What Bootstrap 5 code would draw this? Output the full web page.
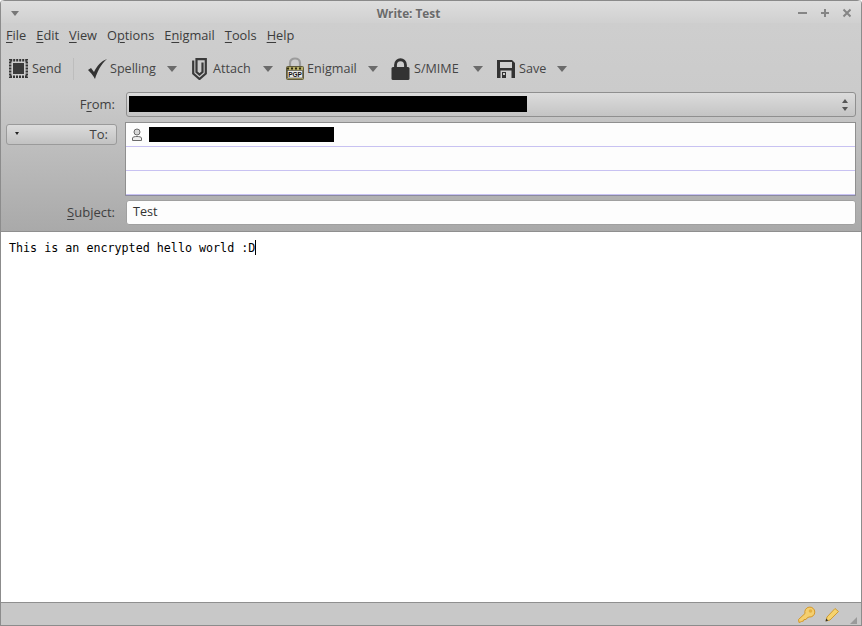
<!DOCTYPE html>
<html lang="en">
<head>
<meta charset="utf-8">
<title>Write: Test</title>
<link href="https://cdn.jsdelivr.net/npm/bootstrap@5.3.0/dist/css/bootstrap.min.css" rel="stylesheet">
<style>
html,body{height:626px;overflow:hidden;background:#fff}
body{font-family:"Open Sans","Noto Sans",sans-serif;font-size:12.6px;color:#3f3f3f;line-height:18px}
u{text-underline-offset:2px;text-decoration-thickness:1px}
.win{height:626px;width:862px;border:1px solid #8c8c8c;border-top:0;border-radius:4px 4px 0 0;overflow:hidden}
.upper{background:linear-gradient(#cfcfcf 0,#cbcbcb 90px,#a9a9a9 231px);border-bottom:1px solid #8f8f8f;height:232px;border-top:1px solid #8a8a8a;border-radius:4px 4px 0 0}
.tbar{height:22px;padding:2px 10px 0 10px;background:linear-gradient(#dedede,#d0d0d0)}
.ttl{font-weight:700;font-size:11.8px;color:#6a6a6a;text-shadow:0 1px 0 #e4e4e4}
.mbar{height:25px;padding-left:5px;gap:10px;font-size:12.8px;color:#3c3c3c;padding-top:3px}
.tools{height:41px;padding-left:8px;color:#454545}
.drp{width:0;height:0;border:5px solid transparent;border-top:6px solid #6b6b6b;border-bottom:0}
.drp-title{border-width:4.500px;border-top:5px solid #777;border-bottom:0}
.tool{height:100%}
.t-send{width:64px;gap:4px}
.t-spell{width:90px;gap:3px;margin-left:13px}
.t-attach{width:81px;gap:6px;margin-left:15px}
.t-enig{width:92px;gap:3px;margin-left:13px}
.t-smime{width:93px;gap:3px;margin-left:12px}
.t-save{width:70px;gap:4px;margin-left:14px}
.sep{width:1px;height:22px;background:#bdbdbd}
.frow{padding-left:5px;padding-right:5px}
.lbl{width:110px;padding:0 1px 2px 0;text-align:right;color:#404040;font-size:13px}
.fromsel{flex:1;margin-left:10px;height:25px;border:1px solid #8f8f8f;border-radius:3px;background:linear-gradient(#dcdcdc,#c4c4c4);padding:3px 2px;position:relative}
.black{background:#000;height:16px}
.spin{position:absolute;right:7px;top:6px;display:flex;flex-direction:column;gap:4px}
.up{width:0;height:0;border:3px solid transparent;border-bottom:4px solid #555;border-top:0}
.dn{width:0;height:0;border:3px solid transparent;border-top:4px solid #555;border-bottom:0}
.tobtn{width:111px;height:21px;margin-top:2px;border:1px solid #9a9a9a;border-radius:3px;background:linear-gradient(#dcdcdc,#c2c2c2);padding:0 8px 2px;color:#404040;font-size:13px}
.tri{width:0;height:0;border:2px solid transparent;border-top:3px solid #222;border-bottom:0}
.tolist{flex:1;margin-left:8px;height:74px;background:#fdfdfd;border:1px solid #8f8f8f;border-bottom-color:#8a8aa0}
.tocell{height:24px;border-bottom:1px solid #c8c2f2;padding-left:6px;gap:7px}
.subj{flex:1;margin-left:10px;height:25px;background:#fdfdfd;border:1px solid #a0a0a0;border-radius:3px;padding:0 6px 2px;color:#333}
.editor{height:370px;background:#fff;font-family:"DejaVu Sans Mono",monospace;font-size:11.7px;color:#000;padding:7px 8px;line-height:18px}
.caret{display:inline-block;width:1px;height:15px;background:#000;vertical-align:-3px}
.status{height:24px;background:#c8c8c8;border-top:1px solid #8f8f8f;padding-right:4px;position:relative}
.grip{width:0;height:0;border-style:solid;border-width:0 0 7px 7px;border-color:transparent transparent #9a9a9a transparent;margin:11px 0 0 10px}
.ic-key{margin-right:9px}
.pgp{font:700 6.500px "Liberation Sans",sans-serif;fill:#111}
</style>
</head>
<body>
<div class="win">
  <div class="upper">
    <div class="tbar d-flex align-items-center">
      <div class="drp drp-title"></div>
      <div class="ttl flex-grow-1 text-center">Write: Test</div>
      <svg width="53" height="12" viewBox="0 0 53 12">
        <g stroke="#858585" stroke-width="2" fill="none">
          <path d="M0 6H9"/><path d="M23 6h8M27 2v8"/><path d="M45.500 2.500l7 7M52.500 2.500l-7 7"/>
        </g>
      </svg>
    </div>
    <div class="mbar d-flex">
      <span><u>F</u>ile</span><span><u>E</u>dit</span><span><u>V</u>iew</span><span>O<u>p</u>tions</span><span>E<u>n</u>igmail</span><span><u>T</u>ools</span><span><u>H</u>elp</span>
    </div>
    <div class="tools d-flex align-items-center">
      <div class="tool t-send d-flex align-items-center">
        <svg width="19" height="19" viewBox="0 0 19 19"><rect x="1.200" y="1.200" width="16.600" height="16.600" fill="none" stroke="#333" stroke-width="2.400" stroke-dasharray="2 1"/><rect x="4" y="4" width="11" height="11" fill="#3a3a3a"/></svg>
        <span>Send</span>
      </div>
      <div class="sep"></div>
      <div class="tool t-spell d-flex align-items-center">
        <svg width="20" height="21" viewBox="0 0 20 21"><path d="M1 12l3-2 3 4C10 8 14 3 20 1 14 6 10 14 8 21 6 17 3 14 1 12z" fill="#333"/></svg>
        <span>Spelling</span><div class="drp ms-auto"></div>
      </div>
      <div class="tool t-attach d-flex align-items-center">
        <svg width="15" height="22" viewBox="0 0 15 22"><path d="M1.200 2.500V15.500L7.500 21 13.800 15.500V1.200H4.500V14L7.500 16.500 10.500 14V4.500" fill="none" stroke="#3a3a3a" stroke-width="2.200"/></svg>
        <span>Attach</span><div class="drp ms-auto"></div>
      </div>
      <div class="tool t-enig d-flex align-items-center">
        <svg width="18" height="23" viewBox="0 0 18 23"><path d="M4 10V6c0-6 10-6 10 0v4" fill="none" stroke="#9c9c9c" stroke-width="2.200"/><rect x=".5" y="9.500" width="17" height="13" rx="1" fill="#b9b06a" stroke="#5f5a3a"/><path d="M1 11.500h16" stroke="#2e2a10" stroke-dasharray="2 2" stroke-width="2"/><rect x="1.500" y="13.500" width="15" height="7.500" fill="#e8e8e8" stroke="#444" stroke-width=".6"/><text x="9" y="19.700" text-anchor="middle" class="pgp">PGP</text></svg>
        <span>Enigmail</span><div class="drp ms-auto"></div>
      </div>
      <div class="tool t-smime d-flex align-items-center">
        <svg width="21" height="22" viewBox="0 0 21 22"><path d="M5.500 10V7c0-7 10-7 10 0v3" fill="none" stroke="#333" stroke-width="2.800"/><rect x="1.500" y="9" width="18" height="13" rx="1.500" fill="#333"/></svg>
        <span>S/MIME</span><div class="drp ms-auto"></div>
      </div>
      <div class="tool t-save d-flex align-items-center">
        <svg width="18" height="18" viewBox="0 0 18 18"><path d="M0 0h15l3 3v15H0z" fill="#333"/><rect x="3" y="2" width="12" height="6" fill="#cfcfcf"/><rect x="3.500" y="10.500" width="11" height="7.500" fill="#cfcfcf"/><rect x="5" y="12" width="4" height="6" fill="#333"/><rect x="6" y="13" width="2" height="2" fill="#cfcfcf"/></svg>
        <span>Save</span><div class="drp ms-auto"></div>
      </div>
    </div>
    <div class="frow d-flex align-items-center" style="height:25px;margin-top:3px">
      <div class="lbl">F<u>r</u>om:</div>
      <div class="fromsel">
        <div class="black" style="width:398px"></div>
        <div class="spin"><div class="up"></div><div class="dn"></div></div>
      </div>
    </div>
    <div class="frow d-flex align-items-start" style="margin-top:5px">
      <div class="tobtn d-flex align-items-center justify-content-between"><div class="tri"></div><span>To:</span></div>
      <div class="tolist">
        <div class="tocell d-flex align-items-center">
          <svg width="10" height="13" viewBox="0 0 10 13"><circle cx="5" cy="4" r="3" fill="#d8d8d8" stroke="#6a6a6a"/><path d="M.5 12.500V10C.5 8 9.500 8 9.500 10v2.500z" fill="#eee" stroke="#6a6a6a"/></svg>
          <div class="black" style="width:185px;height:15px"></div>
        </div>
        <div class="tocell"></div>
        <div class="tocell"></div>
      </div>
    </div>
    <div class="frow d-flex align-items-center" style="margin-top:4px">
      <div class="lbl"><u>S</u>ubject:</div>
      <div class="subj d-flex align-items-center">Test</div>
    </div>
  </div>
  <div class="editor">This is an encrypted hello world :D<span class="caret"></span></div>
  <div class="status d-flex justify-content-end align-items-center">
    <svg class="ic-key" width="18" height="17" viewBox="0 0 18 17"><path d="M1 16.500l-.5-3L7 7.500a5 5 0 1 1 4 3.500l-2 1-1 1.500H6l-.5 1.500-2 .5-1 .5z" fill="#f4cf70" stroke="#d4982a"/><circle cx="12.500" cy="5" r="1.800" fill="#e6b040"/></svg>
    <svg width="15" height="15" viewBox="0 0 15 15"><path d="M1 14l1-4 8-8.500 3.500 3L5 13z" fill="#f5d36e" stroke="#cf9c33"/><path d="M.5 14.500l.7-3 2 2z" fill="#333"/></svg>
    <div class="grip"></div>
  </div>
</div>
</body>
</html>
